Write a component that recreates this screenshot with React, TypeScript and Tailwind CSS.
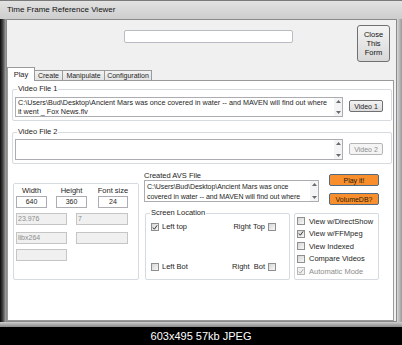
import React from "react";

const Up = () => (
  <svg width="5" height="3" viewBox="0 0 5 3"><path d="M0 3 L2.5 0 L5 3Z" fill="#6b6b6b" /></svg>
);
const Down = () => (
  <svg width="5" height="3" viewBox="0 0 5 3"><path d="M0 0 L2.5 3 L5 0Z" fill="#6b6b6b" /></svg>
);

function Scroll() {
  return (
    <div className="w-[8px] shrink-0 flex flex-col items-center justify-between py-[2px] bg-[#f4f4f4]">
      <Up />
      <Down />
    </div>
  );
}

function Check({ checked, disabled }: { checked?: boolean; disabled?: boolean }) {
  return (
    <div
      className={
        "w-[8px] h-[8px] border flex items-center justify-center shrink-0 " +
        (disabled ? "border-[#b8b8b8] bg-[#f2f2f2]" : "border-[#8e8f8f] bg-gradient-to-br from-[#d6d6d6] to-[#f8f8f8]")
      }
    >
      {checked && (
        <svg width="7" height="7" viewBox="0 0 7 7">
          <path d="M1 3.5 L2.8 5.5 L6 1" stroke={disabled ? "#a0a0a0" : "#2a2a2a"} strokeWidth="1.1" fill="none" />
        </svg>
      )}
    </div>
  );
}

function Input({ w, text, disabled, center }: { w: string; text?: string; disabled?: boolean; center?: boolean }) {
  return (
    <div
      className={
        w +
        " h-[12px] border text-[7px] leading-[10px] px-[1px] " +
        (center ? "text-center " : "") +
        (disabled ? "bg-[#f0f0f0] border-[#c5c5c5] text-[#8d8d8d]" : "bg-white border-[#abadb3] text-[#1e1e1e]")
      }
    >
      {text}
    </div>
  );
}

function Btn({ label, cls }: { label: string; cls: string }) {
  return (
    <div
      className={
        cls +
        " border border-[#707070] rounded-[2px] bg-gradient-to-b from-[#f3f3f3] to-[#dcdcdc] flex items-center justify-center text-[7px] leading-none text-[#1e1e1e] whitespace-nowrap"
      }
    >
      {label}
    </div>
  );
}

function OrangeBtn({ label, cls }: { label: string; cls: string }) {
  return (
    <div
      className={
        cls +
        " border border-[#4f6b86] rounded-[2px] bg-[#f98f2c] flex items-center justify-center text-[7px] leading-none text-[#2a1a0a] whitespace-nowrap"
      }
    >
      {label}
    </div>
  );
}

function Group({ label, cls, children }: { label: string; cls: string; children?: React.ReactNode }) {
  return (
    <div className={cls + " relative border border-[#d5dbe0] rounded-[2px]"}>
      <span className="absolute -top-[6px] left-[4px] bg-white px-[1px] text-[7.5px] leading-[10px] text-[#1e1e1e] whitespace-nowrap">
        {label}
      </span>
      {children}
    </div>
  );
}

function Tab({ label, w, selected }: { label: string; w: string; selected?: boolean }) {
  return selected ? (
    <div
      className={
        w +
        " h-[14px] -mb-px z-10 bg-white border-t border-l border-r border-[#9a9a9a] text-[7.5px] leading-none flex items-center justify-center"
      }
    >
      {label}
    </div>
  ) : (
    <div
      className={
        w +
        " h-[10px] border-t border-r border-[#9a9a9a] bg-gradient-to-b from-[#f2f2f2] to-[#e3e3e3] text-[7px] leading-none flex items-center justify-center whitespace-nowrap"
      }
    >
      {label}
    </div>
  );
}

export default function App() {
  return (
    <div className="w-[402px] h-[345px] bg-black flex flex-col font-['Liberation_Sans',Arial,sans-serif] text-[#1e1e1e] overflow-hidden">
      {/* window */}
      <div className="h-[327px] flex flex-col bg-[#c8c8c8]">
        <div className="h-[19px] flex items-center pl-[7px] text-[8px] bg-gradient-to-b from-[#e2e2e2] to-[#cdcdcd] border-t border-[#7a7a7a] text-[#111]">
          Time Frame Reference Viewer
        </div>
        <div className="flex-1 flex">
          <div className="w-[6px] bg-gradient-to-r from-[#0c0c0c] via-[#4a4a4a] to-[#a8a8a8]" />
          {/* client */}
          <div className="w-[391px] bg-[#f0f0f0] border-t border-l border-b border-r border-[#8a8a8a] flex flex-col">
            {/* top strip */}
            <div className="h-[47px] flex items-start">
              <div className="ml-[117px] mt-[10px] w-[169px] h-[13px] bg-white border border-[#b9bcc2] rounded-[2px]" />
              <div className="ml-[64px] mt-[5px] w-[33px] h-[37px] border border-[#707070] rounded-[3px] bg-gradient-to-b from-[#f4f4f4] to-[#d8d8d8] flex flex-col items-center justify-center text-[7.5px] leading-[9px] text-[#111]">
                <span>Close</span>
                <span>This</span>
                <span>Form</span>
              </div>
            </div>
            {/* tabs */}
            <div className="h-[13px] flex items-end">
              <Tab label="Play" w="w-[28px]" selected />
              <Tab label="Create" w="w-[28px]" />
              <Tab label="Manipulate" w="w-[42px]" />
              <Tab label="Configuration" w="w-[47px]" />
            </div>
            {/* panel */}
            <div className="w-[387px] h-[241px] bg-white border border-[#9a9a9a] flex flex-col">
              {/* Video File 1 */}
              <Group label="Video File 1" cls="ml-[4px] mt-[8px] w-[380px] h-[32px]">
                <div className="flex items-start">
                  <div className="ml-[2px] mt-[7px] w-[328px] h-[20px] border border-[#abadb3] bg-white flex">
                    <div className="flex-1 pl-[2px] text-[7.2px] leading-[9px] text-[#1e1e1e] whitespace-nowrap overflow-hidden">
                      C:\Users\Bud\Desktop\Ancient Mars was once covered in water -- and MAVEN will find out where
                      <br />
                      it went _ Fox News.flv
                    </div>
                    <Scroll />
                  </div>
                  <Btn label="Video 1" cls="ml-[6px] mt-[10px] w-[34px] h-[12px]" />
                </div>
              </Group>
              {/* Video File 2 */}
              <Group label="Video File 2" cls="ml-[4px] mt-[11px] w-[380px] h-[32px]">
                <div className="flex items-start">
                  <div className="ml-[2px] mt-[6px] w-[328px] h-[21px] border border-[#abadb3] bg-white flex">
                    <div className="flex-1" />
                    <Scroll />
                  </div>
                  <div className="ml-[6px] mt-[10px] w-[34px] h-[12px] border border-[#b5b5b5] rounded-[2px] bg-[#f4f4f4] flex items-center justify-center text-[7px] leading-none text-[#8d8d8d]">
                    Video 2
                  </div>
                </div>
              </Group>
              {/* bottom section */}
              <div className="flex items-start">
                {/* left group */}
                <div className="ml-[5px] mt-[19px] w-[126px] h-[97px] border border-[#d5dbe0] rounded-[2px] flex flex-col">
                  <div className="flex items-end mt-[1px]">
                    <div className="ml-[2px] w-[31px] flex flex-col items-center">
                      <span className="text-[7.5px] leading-[11px]">Width</span>
                      <Input w="w-[31px]" text="640" center />
                    </div>
                    <div className="ml-[9px] w-[31px] flex flex-col items-center">
                      <span className="text-[7.5px] leading-[11px]">Height</span>
                      <Input w="w-[31px]" text="360" center />
                    </div>
                    <div className="ml-[11px] w-[30px] flex flex-col items-center">
                      <span className="text-[7.5px] leading-[11px] whitespace-nowrap">Font size</span>
                      <Input w="w-[30px]" text="24" center />
                    </div>
                  </div>
                  <div className="flex mt-[5px]">
                    <Input w="ml-[2px] w-[51px]" text="23.976" disabled />
                    <Input w="ml-[9px] w-[52px]" text="7" disabled />
                  </div>
                  <div className="flex mt-[7px]">
                    <Input w="ml-[2px] w-[51px]" text="libx264" disabled />
                    <Input w="ml-[9px] w-[52px]" disabled />
                  </div>
                  <div className="flex mt-[5px]">
                    <Input w="ml-[2px] w-[51px]" disabled />
                  </div>
                </div>
                {/* right part */}
                <div className="ml-[5px] w-[236px] flex flex-col">
                  <div className="flex items-start">
                    <div className="flex flex-col mt-[8px]">
                      <span className="text-[7.5px] leading-[8px] h-[8px]">Created AVS File</span>
                      <div className="w-[175px] h-[22px] border border-[#abadb3] bg-white flex">
                        <div className="flex-1 pl-[2px] pt-[1px] text-[7px] leading-[10px] tracking-[-0.05px] text-[#1e1e1e] whitespace-nowrap overflow-hidden">
                          C:\Users\Bud\Desktop\Ancient Mars was once
                          <br />
                          covered in water -- and MAVEN will find out where
                        </div>
                        <Scroll />
                      </div>
                    </div>
                    <div className="ml-[10px] flex flex-col">
                      <OrangeBtn label="Play it!" cls="mt-[10px] w-[50px] h-[12px]" />
                      <OrangeBtn label="VolumeDB?" cls="mt-[7px] w-[50px] h-[12px]" />
                    </div>
                  </div>
                  <div className="flex mt-[8px]">
                    <Group label="Screen Location" cls="ml-[1px] w-[145px] h-[67px]">
                      <div className="flex flex-col text-[7.5px] leading-[10px]">
                        <div className="flex items-center mt-[8px] ml-[5px] mr-[13px]">
                          <Check checked />
                          <span className="ml-[3px]">Left top</span>
                          <div className="flex-1" />
                          <span className="mr-[3px]">Right Top</span>
                          <Check />
                        </div>
                        <div className="flex items-center mt-[30px] ml-[5px] mr-[13px]">
                          <Check />
                          <span className="ml-[3px]">Left Bot</span>
                          <div className="flex-1" />
                          <span className="mr-[3px]">Right&nbsp;&nbsp;Bot</span>
                          <Check />
                        </div>
                      </div>
                    </Group>
                    <div className="ml-[4px] w-[85px] h-[67px] border border-[#d5dbe0] rounded-[2px] flex flex-col pt-[1px] text-[7.5px]">
                      {[
                        ["View w/DirectShow", false, false],
                        ["View w/FFMpeg", true, false],
                        ["View Indexed", false, false],
                        ["Compare Videos", false, false],
                        ["Automatic Mode", true, true],
                      ].map(([l, c, d]) => (
                        <div key={l as string} className="h-[12.5px] flex items-center ml-[2px]">
                          <Check checked={c as boolean} disabled={d as boolean} />
                          <span className={"ml-[4px] leading-none whitespace-nowrap " + (d ? "text-[#8d8d8d]" : "")}>{l as string}</span>
                        </div>
                      ))}
                    </div>
                  </div>
                </div>
              </div>
            </div>
          </div>
          <div className="flex-1 bg-gradient-to-r from-[#d8d8d8] to-[#9a9a9a]" />
        </div>
        <div className="h-[5px] bg-gradient-to-b from-[#cfcfcf] to-[#8a8a8a]" />
      </div>
      <div className="flex-1 flex items-center justify-center text-white text-[11px] leading-none">
        603x495 57kb JPEG
      </div>
    </div>
  );
}
